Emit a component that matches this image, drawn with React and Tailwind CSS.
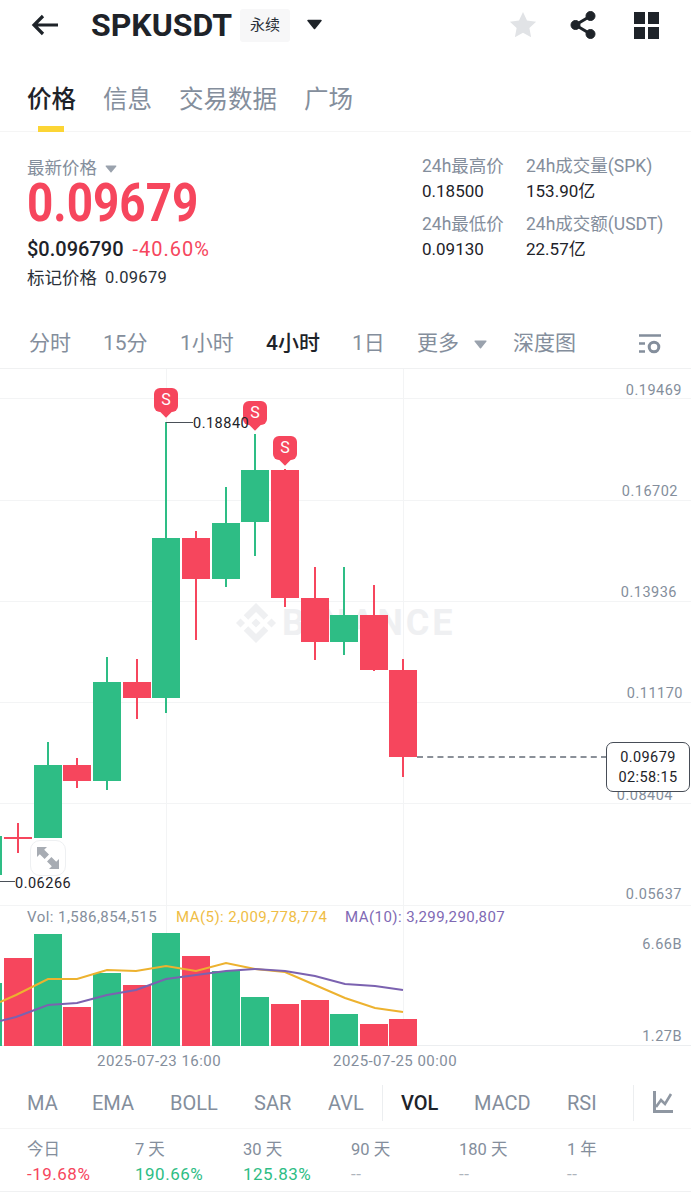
const GREEN = "#2ebd85";
const RED = "#f6465d";

// x is the candle centre, the rest are page y values
const candles = [
  { x: -12, top: 836, bottom: 875, high: 836, low: 875, up: true, volTop: 983 },
  { x: 18, top: 837, bottom: 839, high: 823, low: 853, up: false, volTop: 958 },
  { x: 48, top: 765, bottom: 838, high: 742, low: 838, up: true, volTop: 934 },
  { x: 77, top: 765, bottom: 781, high: 758, low: 788, up: false, volTop: 1007 },
  { x: 107, top: 682, bottom: 781, high: 657, low: 790, up: true, volTop: 973 },
  { x: 137, top: 682, bottom: 698, high: 659, low: 719, up: false, volTop: 985 },
  { x: 166, top: 538, bottom: 698, high: 422, low: 713, up: true, volTop: 933 },
  { x: 196, top: 538, bottom: 579, high: 531, low: 640, up: false, volTop: 956 },
  { x: 226, top: 523, bottom: 579, high: 487, low: 587, up: true, volTop: 971 },
  { x: 255, top: 470, bottom: 522, high: 434, low: 556, up: true, volTop: 997 },
  { x: 285, top: 470, bottom: 598, high: 469, low: 607, up: false, volTop: 1004 },
  { x: 315, top: 598, bottom: 642, high: 567, low: 660, up: false, volTop: 1000 },
  { x: 344, top: 615, bottom: 642, high: 567, low: 655, up: true, volTop: 1014 },
  { x: 374, top: 615, bottom: 670, high: 585, low: 671, up: false, volTop: 1024 },
  { x: 403, top: 670, bottom: 757, high: 659, low: 777, up: false, volTop: 1019 },
];

const gridLines = [398, 500, 601, 702, 803, 905];

const axisLabels = [
  { text: "0.19469", right: 682, y: 391 },
  { text: "0.16702", right: 678, y: 492 },
  { text: "0.13936", right: 677, y: 593 },
  { text: "0.11170", right: 683, y: 694 },
  { text: "0.08404", right: 673, y: 796 },
  { text: "0.05637", right: 682, y: 895 },
  { text: "6.66B", right: 682, y: 945 },
  { text: "1.27B", right: 682, y: 1037 },
];

const sellMarks = [
  { x: 166, y: 388 },
  { x: 255, y: 401 },
  { x: 285, y: 436 },
];

const timeframes = [
  { label: "分时", width: "w-[74px]" },
  { label: "15分", width: "w-[77px]" },
  { label: "1小时", width: "w-[86px]" },
  { label: "4小时", width: "w-[86px]", active: true },
  { label: "1日", width: "w-[65px]" },
];

const indicators = [
  { label: "MA", width: "w-[65px]" },
  { label: "EMA", width: "w-[78px]" },
  { label: "BOLL", width: "w-[84px]" },
  { label: "SAR", width: "w-[74px]" },
  { label: "AVL", width: "w-[54px]" },
];

const periods = [
  { label: "今日", value: "-19.68%", color: "text-[#f6465d]" },
  { label: "7 天", value: "190.66%", color: "text-[#2ebd85]" },
  { label: "30 天", value: "125.83%", color: "text-[#2ebd85]" },
  { label: "90 天", value: "--", color: "text-[#aeb4bc]" },
  { label: "180 天", value: "--", color: "text-[#aeb4bc]" },
  { label: "1 年", value: "--", color: "text-[#aeb4bc]" },
];

function Caret({ className }) {
  return (
    <svg viewBox="0 0 14 10" className={className} fill="currentColor">
      <path d="M1 0.5h12a0.8 0.8 0 0 1 0.6 1.3L7.6 9.2a0.8 0.8 0 0 1-1.2 0L0.4 1.8A0.8 0.8 0 0 1 1 0.5z" />
    </svg>
  );
}

function Header() {
  return (
    <div className="flex h-[50px] items-center text-[#1e2329]">
      <svg viewBox="0 0 28 22" className="ml-[31px] h-[22px] w-[28px]" fill="none" stroke="currentColor" strokeWidth="3.2">
        <path d="M27 11H3M12 2l-9 9 9 9" />
      </svg>
      <span className="ml-[32px] w-[141px] text-[32px] leading-none font-bold whitespace-nowrap">SPKUSDT</span>
      <span className="ml-[8px] flex h-[33px] w-[50px] items-center justify-center rounded-[3px] bg-[#f7f7f8] text-[15px] text-[#2b3139]">永续</span>
      <Caret className="ml-[17px] h-[11px] w-[15px] -translate-y-[1px]" />
      <svg viewBox="0 0 24 24" className="ml-[186px] h-[30px] w-[30px] text-[#e1e3e6]" fill="currentColor">
        <path d="M12 1.5l3.2 6.9 7.3.9-5.4 5 1.4 7.4L12 18.1l-6.5 3.6 1.4-7.4-5.4-5 7.3-.9z" />
      </svg>
      <svg viewBox="0 0 26 28" className="ml-[32px] h-[28px] w-[26px]" fill="currentColor" stroke="currentColor">
        <circle cx="20.5" cy="5" r="4.5" />
        <circle cx="5.5" cy="14" r="4.5" />
        <circle cx="20.5" cy="23" r="4.5" />
        <path d="M20.5 5L5.5 14l15 9" fill="none" strokeWidth="3" />
      </svg>
      <div className="ml-[38px] grid grid-cols-2 gap-[3px]">
        <div className="h-[12px] w-[11px] bg-[#1e2329]" />
        <div className="h-[12px] w-[11px] bg-[#1e2329]" />
        <div className="h-[12px] w-[11px] bg-[#1e2329]" />
        <div className="h-[12px] w-[11px] bg-[#1e2329]" />
      </div>
    </div>
  );
}

function Tabs() {
  return (
    <div className="mt-[31px] flex h-[51px] gap-[27px] border-b border-[#f5f5f5] pt-[1px] pl-[27px] text-[24.5px] leading-[36px] text-[#848e9c]">
      <div className="relative font-medium text-[#1e2329]">
        价格
        <div className="absolute -bottom-[1px] left-[11px] h-[6px] w-[26px] bg-[#fcd535]" />
      </div>
      <div>信息</div>
      <div>交易数据</div>
      <div>广场</div>
    </div>
  );
}

function Stat({ label, value }) {
  return (
    <div>
      <div className="h-[25px] text-[17.5px] leading-[25px] whitespace-nowrap text-[#848e9c]">{label}</div>
      <div className="h-[33px] text-[17px] leading-[25px] text-[#1e2329]">{value}</div>
    </div>
  );
}

function PriceStats() {
  return (
    <div className="flex h-[187px] justify-between pt-[22px] pl-[27px]">
      <div>
        <div className="mt-[2px] flex h-[25px] items-center text-[17.5px] text-[#848e9c]">
          最新价格
          <Caret className="ml-[8px] h-[8px] w-[12px] text-[#9aa2ad]" />
        </div>
        <div className="mt-[1px] h-[42px] origin-left scale-x-[0.85] text-[54px] leading-[42px] font-bold text-[#f6465d]">0.09679</div>
        <div className="mt-[11px] flex h-[28px] items-center gap-[9px] text-[20px]">
          <span className="font-medium text-[#1e2329]">$0.096790</span>
          <span className="tracking-[1px] text-[#f6465d]">-40.60%</span>
        </div>
        <div className="mt-[2px] flex h-[26px] items-center gap-[8px] text-[17.5px] text-[#2b3139]">
          <span>标记价格</span>
          <span className="text-[16.5px] tracking-[0.3px]">0.09679</span>
        </div>
      </div>
      <div className="mr-[28px] grid w-[241px] grid-cols-[104px_1fr]">
        <div className="flex flex-col">
          <Stat label="24h最高价" value="0.18500" />
          <Stat label="24h最低价" value="0.09130" />
        </div>
        <div className="flex flex-col">
          <Stat label="24h成交量(SPK)" value="153.90亿" />
          <Stat label="24h成交额(USDT)" value="22.57亿" />
        </div>
      </div>
    </div>
  );
}

function Timeframes() {
  return (
    <div className="flex h-[50px] items-center border-b border-[#f0f1f2] pt-[1px] pl-[29px] text-[21px] text-[#848e9c]">
      {timeframes.map((t) => (
        <div key={t.label} className={`${t.width} ${t.active ? "font-medium text-[#1e2329]" : ""}`}>
          {t.label}
        </div>
      ))}
      <div>更多</div>
      <Caret className="ml-[15px] h-[9px] w-[13px] text-[#9aa2ad]" />
      <div className="ml-[26px]">深度图</div>
      <svg viewBox="0 0 22 20" className="ml-[63px] h-[20px] w-[22px] text-[#848e9c]" fill="none" stroke="currentColor" strokeWidth="2.4">
        <path d="M0 1.5h22M0 9.5h6M0 17.5h6" />
        <circle cx="15" cy="13" r="4.8" strokeWidth="3" />
      </svg>
    </div>
  );
}

function Candle({ c }) {
  const color = c.up ? GREEN : RED;
  return (
    <>
      <div className="absolute w-[2px]" style={{ left: c.x - 1, top: c.high - 369, height: c.low - c.high, backgroundColor: color }} />
      <div className="absolute w-[28px]" style={{ left: c.x - 14, top: c.top - 369, height: c.bottom - c.top, backgroundColor: color }} />
      <div className="absolute w-[28px]" style={{ left: c.x - 14, top: c.volTop - 369, height: 1046 - c.volTop, backgroundColor: color }} />
    </>
  );
}

function SellMark({ x, y }) {
  return (
    <div className="absolute z-10 flex h-[24px] w-[24px] items-center justify-center rounded-[6px] bg-[#f6465d] text-[16px] leading-none text-white" style={{ left: x - 12, top: y - 369 }}>
      S
      <div className="absolute -bottom-[4px] left-[8px] -z-10 h-[8px] w-[8px] rotate-45 bg-[#f6465d]" />
    </div>
  );
}

function Chart() {
  const ma5 = "0,1002 16,995 48,979 77,979 107,970 136,971 166,966 196,971 226,963 255,969 285,972 315,985 345,998 375,1008 403,1012";
  const ma10 = "0,1021 16,1017 48,1005 77,1003 107,995 136,990 166,979 196,975 226,971 255,969 285,971 315,976 345,984 375,986 403,990";
  return (
    <div className="relative h-[677px] overflow-hidden">
      {gridLines.map((y) => (
        <div key={y} className="absolute inset-x-0 h-px bg-[#f3f4f5]" style={{ top: y - 369 }} />
      ))}
      <div className="absolute bottom-0 left-[166px] top-0 w-px bg-[#f3f4f5]" />
      <div className="absolute bottom-0 left-[403px] top-0 w-px bg-[#f3f4f5]" />
      <div className="absolute inset-x-0 bottom-0 h-px bg-[#eceef0]" />

      {/* watermark */}
      <div className="absolute left-[236px] top-[234px] flex items-center gap-[6px] whitespace-nowrap text-[#eff0f2]">
        <svg viewBox="0 0 126.61 126.61" className="h-[40px] w-[40px]" fill="currentColor">
          <path d="M38.73 53.2l24.59-24.58 24.6 24.6 14.3-14.31L63.32 0 24.42 38.9z" />
          <path d="M0 63.31L14.3 49l14.31 14.31-14.31 14.3z" />
          <path d="M38.73 73.41l24.59 24.59 24.6-24.6 14.31 14.29-38.9 38.91-38.91-38.88z" />
          <path d="M98 63.31L112.3 49l14.31 14.3-14.31 14.32z" />
          <path d="M77.83 63.3L63.32 48.78 52.59 59.51l-1.24 1.23-2.54 2.54 14.51 14.5 14.51-14.47z" />
        </svg>
        <span className="text-[36px] leading-none font-bold tracking-[3px]">BINANCE</span>
      </div>

      {axisLabels.map((a) => (
        <div key={a.text} className="absolute text-[14.5px] leading-[18px] tracking-[0.5px] text-[#848e9c]" style={{ right: 691 - a.right, top: a.y - 369 - 9 }}>
          {a.text}
        </div>
      ))}

      {candles.map((c) => (
        <Candle key={c.x} c={c} />
      ))}

      <svg viewBox="0 369 691 677" className="absolute inset-0 h-full w-full" fill="none" strokeWidth="2">
        <polyline points={ma5} stroke="#edb22f" />
        <polyline points={ma10} stroke="#7b62b0" />
      </svg>

      {sellMarks.map((m) => (
        <SellMark key={m.x} x={m.x} y={m.y} />
      ))}

      {/* high and low labels */}
      <div className="absolute left-[166px] top-[53px] h-px w-[27px] bg-[#4a5058]" />
      <div className="absolute left-[193px] top-[46px] z-20 text-[14.5px] leading-[18px] tracking-[0.5px] text-[#1e2329]">0.18840</div>
      <div className="absolute left-0 top-[512px] h-px w-[15px] bg-[#4a5058]" />
      <div className="absolute left-[15px] top-[506px] text-[14.5px] leading-[18px] tracking-[0.5px] text-[#1e2329]">0.06266</div>

      {/* expand button */}
      <div className="absolute left-[30px] top-[471px] flex h-[36px] w-[36px] items-center justify-center rounded-[10px] border border-[#eef0f2] bg-white/90">
        <svg viewBox="0 0 24 24" className="h-[24px] w-[24px] text-[#a7acb3]" fill="currentColor">
          <path d="M1 1h10L8.2 3.8 13 8.6 8.6 13 3.8 8.2 1 11z" />
          <path d="M23 23H13l2.8-2.8L11 15.4l4.4-4.4 4.8 4.8L23 13z" />
        </svg>
      </div>

      {/* last price */}
      <div className="absolute left-[417px] top-[387px] w-[190px] border-t-2 border-dashed border-[#8a9098]" />
      <div className="absolute left-[606px] top-[373px] flex h-[50px] w-[84px] flex-col items-center justify-center rounded-[7px] border border-[#474d57] bg-white pt-[1px] text-[14.5px] leading-[20px] tracking-[0.4px] text-[#1e2329]">
        <div>0.09679</div>
        <div>02:58:15</div>
      </div>

      {/* volume legend */}
      <div className="absolute left-[27px] top-[538px] flex text-[15px] leading-[20px] tracking-[0.45px] whitespace-nowrap">
        <span className="w-[149px] text-[#848e9c]">Vol: 1,586,854,515</span>
        <span className="w-[169px] text-[#efbd45]">MA(5): 2,009,778,774</span>
        <span className="text-[#8069b4]">MA(10): 3,299,290,807</span>
      </div>
    </div>
  );
}

function DateAxis() {
  return (
    <div className="flex h-[30px] items-center pl-[97px] text-[15px] tracking-[0.45px] text-[#848e9c]">
      <span className="w-[236px]">2025-07-23 16:00</span>
      <span>2025-07-25 00:00</span>
    </div>
  );
}

function Indicators() {
  return (
    <div className="flex h-[53px] items-center border-b border-[#f5f5f5] pt-[1px] pl-[27px] text-[20px] text-[#848e9c]">
      {indicators.map((i) => (
        <div key={i.label} className={i.width}>
          {i.label}
        </div>
      ))}
      <div className="h-[36px] w-px bg-[#eceef0]" />
      <div className="ml-[18px] w-[73px] font-medium text-[#1e2329]">VOL</div>
      <div className="w-[93px]">MACD</div>
      <div className="w-[66px]">RSI</div>
      <div className="h-[36px] w-px bg-[#eceef0]" />
      <svg viewBox="0 0 20 24" className="ml-[19px] h-[24px] w-[20px] text-[#8f97a2]" fill="none" stroke="currentColor" strokeWidth="3">
        <path d="M1.5 0v20.5H20" />
        <path d="M3 16l5-7 4 4 6-10" strokeWidth="2.6" />
      </svg>
    </div>
  );
}

function Periods() {
  return (
    <div className="grid h-[63px] grid-cols-[108px_108px_108px_108px_108px_1fr] border-b border-[#f0f1f2] pt-[8px] pl-[27px]">
      {periods.map((p) => (
        <div key={p.label}>
          <div className="h-[25px] text-[16.5px] leading-[25px] text-[#848e9c]">{p.label}</div>
          <div className={`h-[25px] text-[17px] leading-[25px] tracking-[0.5px] ${p.color}`}>{p.value}</div>
        </div>
      ))}
    </div>
  );
}

export default function App() {
  return (
    <div className="h-[1200px] w-[691px] overflow-hidden bg-white font-['Roboto','Noto_Sans_CJK_SC',sans-serif]">
      <Header />
      <Tabs />
      <PriceStats />
      <Timeframes />
      <Chart />
      <DateAxis />
      <Indicators />
      <Periods />
    </div>
  );
}
